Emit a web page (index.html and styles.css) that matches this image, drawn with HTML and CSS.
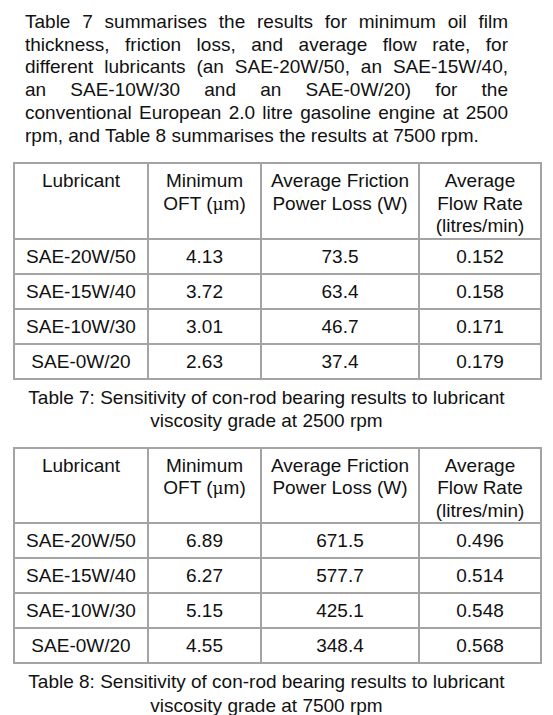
FILE: index.html
```html
<!DOCTYPE html>
<html lang="en">
<head>
    <meta charset="UTF-8">
    <meta name="viewport" content="width=device-width, initial-scale=1.0">
    <title>Lubricant tables</title>
    <link rel="stylesheet" href="styles.css">
</head>
<body>

    <p class="intro">
        <span class="line">Table 7 summarises the results for minimum oil film</span>
        <span class="line">thickness, friction loss, and average flow rate, for</span>
        <span class="line">different lubricants (an SAE-20W/50, an SAE-15W/40,</span>
        <span class="line">an SAE-10W/30 and an SAE-0W/20) for the</span>
        <span class="line">conventional European 2.0 litre gasoline engine at 2500</span>
        <span class="line last">rpm, and Table 8 summarises the results at 7500 rpm.</span>
    </p>

    <table class="results">
        <colgroup>
            <col class="c1"><col class="c2"><col class="c3"><col class="c4">
        </colgroup>
        <tr>
            <th>Lubricant</th>
            <th>Minimum<br>OFT (<span class="mu">μ</span>m)</th>
            <th>Average Friction<br>Power Loss (W)</th>
            <th>Average<br>Flow Rate<br>(litres/min)</th>
        </tr>
        <tr><td>SAE-20W/50</td><td>4.13</td><td>73.5</td><td>0.152</td></tr>
        <tr><td>SAE-15W/40</td><td>3.72</td><td>63.4</td><td>0.158</td></tr>
        <tr><td>SAE-10W/30</td><td>3.01</td><td>46.7</td><td>0.171</td></tr>
        <tr><td>SAE-0W/20</td><td>2.63</td><td>37.4</td><td>0.179</td></tr>
    </table>
    <p class="caption">Table 7: Sensitivity of con-rod bearing results to lubricant<br>viscosity grade at 2500 rpm</p>

    <table class="results">
        <colgroup>
            <col class="c1"><col class="c2"><col class="c3"><col class="c4">
        </colgroup>
        <tr>
            <th>Lubricant</th>
            <th>Minimum<br>OFT (<span class="mu">μ</span>m)</th>
            <th>Average Friction<br>Power Loss (W)</th>
            <th>Average<br>Flow Rate<br>(litres/min)</th>
        </tr>
        <tr><td>SAE-20W/50</td><td>6.89</td><td>671.5</td><td>0.496</td></tr>
        <tr><td>SAE-15W/40</td><td>6.27</td><td>577.7</td><td>0.514</td></tr>
        <tr><td>SAE-10W/30</td><td>5.15</td><td>425.1</td><td>0.548</td></tr>
        <tr><td>SAE-0W/20</td><td>4.55</td><td>348.4</td><td>0.568</td></tr>
    </table>
    <p class="caption">Table 8: Sensitivity of con-rod bearing results to lubricant<br>viscosity grade at 7500 rpm</p>

</body>
</html>
```

FILE: styles.css
```css
body {
    margin: 0;
    padding: 11px 0 0 0;
    background: #fff;
    color: #111;
    font-family: 'Liberation Sans', Arial, sans-serif;
    font-size: 19px;
}

.intro {
    width: 483px;
    margin: 0 0 15px 25px;
    line-height: 22.7px;
}

.line {
    display: block;
    text-align: justify;
    text-align-last: justify;
}

.line.last {
    text-align: left;
    text-align-last: left;
}

.results {
    margin-left: 13px;
    width: 527px;
    border-collapse: collapse;
    table-layout: fixed;
}

.c1 { width: 134px; }
.c2 { width: 113px; }
.c3 { width: 158px; }
.c4 { width: 122px; }

.results th,
.results td {
    border: 2px solid #a4a4a4;
    text-align: center;
    font-weight: normal;
    line-height: 23px;
}

.results th {
    vertical-align: top;
    line-height: 22.5px;
    padding: 6px 2px 0;
}

.results td {
    height: 33px;
    padding: 0 2px;
}

.mu {
    font-family: 'DejaVu Serif', serif;
    font-size: 17px;
}

.caption {
    width: 483px;
    margin: 6px 0 14px 25px;
    text-align: center;
    line-height: 23.5px;
}
```
